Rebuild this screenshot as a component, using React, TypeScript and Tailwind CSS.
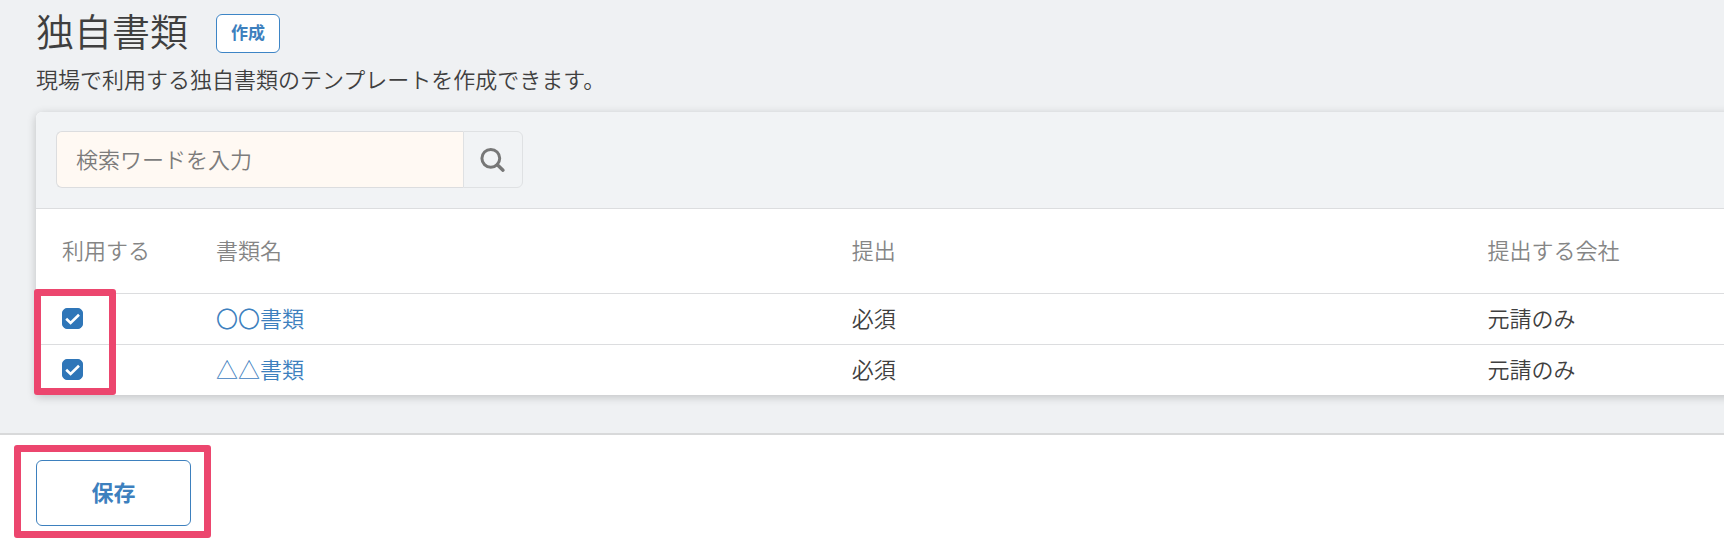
import { useState } from "react";

type Doc = { id: string; name: string; submit: string; company: string; enabled: boolean };

const initialDocs: Doc[] = [
  { id: "doc-1", name: "〇〇書類", submit: "必須", company: "元請のみ", enabled: true },
  { id: "doc-2", name: "△△書類", submit: "必須", company: "元請のみ", enabled: true },
];

function SearchIcon() {
  return (
    <svg viewBox="0 0 26 26" className="size-[26px]" fill="none" stroke="#777777" aria-hidden="true">
      <circle cx="10.8" cy="11.3" r="8.9" strokeWidth="3" />
      <path d="M17.3 17.8 L23 23.2" strokeWidth="3.4" strokeLinecap="round" />
    </svg>
  );
}

function Tick({ label, checked, onChange }: { label: string; checked: boolean; onChange: () => void }) {
  return (
    <label className="relative block size-[21px]">
      <input
        type="checkbox"
        aria-label={label}
        checked={checked}
        onChange={onChange}
        className="peer block size-[21px] appearance-none rounded-[5px] border border-[#2f76b8] bg-white checked:bg-[#2f76b8]"
      />
      <svg
        viewBox="0 0 21 21"
        className="pointer-events-none absolute inset-0 hidden size-[21px] peer-checked:block"
        fill="none"
        stroke="#ffffff"
        strokeWidth="2.6"
        aria-hidden="true"
      >
        <path d="M4.2 10.8 L8.6 15 L17 6.8" />
      </svg>
    </label>
  );
}

export default function App() {
  const [docs, setDocs] = useState(initialDocs);
  const toggle = (id: string) =>
    setDocs(docs.map((d) => (d.id === id ? { ...d, enabled: !d.enabled } : d)));

  return (
    <div
      lang="ja"
      className="flex min-h-screen flex-col overflow-hidden bg-[#eff1f3] font-['Noto_Sans_CJK_JP',sans-serif] text-[22px] leading-8 font-[350] text-[#3f3f3f]"
    >
      <main className="pb-[38px] pl-9">
        <header>
          <div className="flex items-end gap-7">
            <h1 className="pt-1 text-[38px] leading-[52px] font-[350]">独自書類</h1>
            <button
              type="button"
              className="mb-[3px] h-[39px] w-16 rounded-md border border-[#3d85c6] bg-white pb-[3px] text-[17px] leading-6 font-bold text-[#3d80be]"
            >
              作成
            </button>
          </div>
          <p className="pt-[6px] pb-[18px]">現場で利用する独自書類のテンプレートを作成できます。</p>
        </header>

        <section className="-mr-3 rounded-tl-md bg-white shadow-[0_2px_10px_rgba(0,0,0,0.2)]">
          <form
            role="search"
            onSubmit={(e) => e.preventDefault()}
            className="flex rounded-tl-md border-b border-[#dcdddf] bg-[#f1f3f5] pt-[19px] pb-5 pl-5"
          >
            <input
              type="search"
              aria-label="検索ワードを入力"
              placeholder="検索ワードを入力"
              className="h-[57px] w-[407px] rounded-l-md border border-r-0 border-[#dcdddf] bg-[#fff9f3] px-[19px] pb-1 outline-none placeholder:text-[#7c7c7c]"
            />
            <button
              type="submit"
              aria-label="検索"
              className="flex h-[57px] w-[60px] items-center justify-center rounded-r-md border border-[#dfe1e3]"
            >
              <SearchIcon />
            </button>
          </form>

          <div className="relative">
            <table className="w-full table-fixed border-collapse text-left">
              <colgroup>
                <col className="w-[154px]" />
                <col className="w-[37.4%]" />
                <col className="w-[37.4%]" />
                <col />
              </colgroup>
              <thead>
                <tr className="h-[84px] border-b border-[#dcdddf] text-[#858585]">
                  <th scope="col" className="pb-1 pl-[26px] font-[350]">利用する</th>
                  <th scope="col" className="pb-1 pl-[26px] font-[350]">書類名</th>
                  <th scope="col" className="pb-1 pl-[26px] font-[350]">提出</th>
                  <th scope="col" className="pb-1 pl-[26px] font-[350]">提出する会社</th>
                </tr>
              </thead>
              <tbody>
                {docs.map((d) => (
                  <tr key={d.id} className="h-[51px] border-b border-[#dcdddf] last:border-b-0">
                    <td className="pl-[26px]">
                      <Tick label={d.name} checked={d.enabled} onChange={() => toggle(d.id)} />
                    </td>
                    <td className="pb-1 pl-[26px]">
                      <a href="#" className="text-[#3d80be]">{d.name}</a>
                    </td>
                    <td className="pb-1 pl-[26px]">{d.submit}</td>
                    <td className="pb-1 pl-[26px]">{d.company}</td>
                  </tr>
                ))}
              </tbody>
            </table>
            <div className="pointer-events-none absolute bottom-0 -left-0.5 h-[106px] w-[82px] rounded-[3px] border-[7px] border-[#ec466e]" />
          </div>
        </section>
      </main>

      <footer className="flex-1 border-t-2 border-[#d8d9da] bg-white pt-[25px] pb-5 pl-9">
        <div className="relative inline-block">
          <button
            type="button"
            className="block h-[66px] w-[155px] rounded-md border border-[#3d80be] bg-white pb-1 font-bold text-[#3d80be]"
          >
            保存
          </button>
          <div className="pointer-events-none absolute -top-[15px] -right-5 -bottom-3 -left-[22px] rounded-[3px] border-[7px] border-[#ec466e]" />
        </div>
      </footer>
    </div>
  );
}
